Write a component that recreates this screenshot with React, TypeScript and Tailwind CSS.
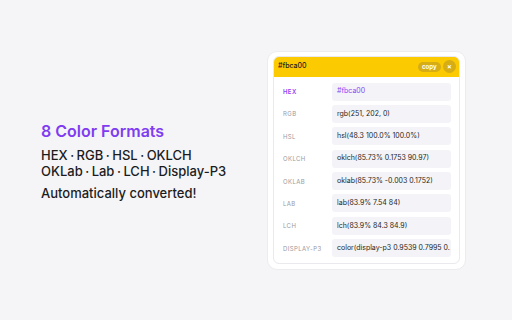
import React from 'react';

const rows = [
  { label: 'HEX', value: '#fbca00', active: true },
  { label: 'RGB', value: 'rgb(251, 202, 0)' },
  { label: 'HSL', value: 'hsl(48.3 100.0% 100.0%)' },
  { label: 'OKLCH', value: 'oklch(85.73% 0.1753 90.97)' },
  { label: 'OKLAB', value: 'oklab(85.73% -0.003 0.1752)' },
  { label: 'LAB', value: 'lab(83.9% 7.54 84)' },
  { label: 'LCH', value: 'lch(83.9% 84.3 84.9)' },
  { label: 'DISPLAY-P3', value: 'color(display-p3 0.9539 0.7995 0.' },
];

const Dot = () => <span className="mx-[2.5px]">·</span>;

const App: React.FC = () => {
  return (
    <div
      className="w-[512px] h-[320px] bg-[#f5f5f7] flex items-center"
      style={{ fontFamily: 'Inter, "Noto Sans", sans-serif' }}
    >
      {/* Left copy */}
      <div className="w-[267px] pl-[41px] pt-[2px] text-[#1c1c1e]">
        <h1 className="text-[16px] leading-[20px] font-semibold text-[#7f3cf0]">8 Color Formats</h1>
        <p className="mt-[6px] text-[13px] leading-[16.3px] font-medium">
          HEX<Dot />RGB<Dot />HSL<Dot />OKLCH
          <br />
          OKLab<Dot />Lab<Dot />LCH<Dot />Display-P3
        </p>
        <p className="mt-[6px] text-[13px] leading-[16px] font-medium">Automatically converted!</p>
      </div>

      {/* Popup preview */}
      <div className="w-[199px] h-[219px] bg-white rounded-[10px] border border-[#ececef] pt-[4px] px-[5px] pb-[5px]">
        <div className="h-full rounded-[6px] border border-[#e9e9ee] overflow-hidden flex flex-col">
          <div className="h-[20px] bg-[#fbca00] flex items-center justify-between pl-[4px] pr-[3px]">
            <span className="text-[7px] font-medium text-[#1c1c1c]">#fbca00</span>
            <div className="flex items-center gap-[2px]">
              <span className="h-[10px] px-[4.5px] rounded-full bg-[#d6ad14] text-white text-[6px] font-bold leading-[10px]">
                copy
              </span>
              <span className="w-[13px] h-[13px] rounded-full bg-[#d6ad14] text-white text-[7px] font-bold leading-[13px] text-center">
                ×
              </span>
            </div>
          </div>
          <div className="flex flex-col gap-[4.4px] pt-[6px] pl-[9px] pr-[8px]">
            {rows.map((row) => (
              <div key={row.label} className="flex items-center h-[18px]">
                <span
                  className={`w-[49px] text-[6px] tracking-[0.4px] ${
                    row.active ? 'text-[#8b44f5] font-semibold' : 'text-[#9a9aa0]'
                  }`}
                >
                  {row.label}
                </span>
                <div className="flex-1 h-[18px] rounded-[3px] bg-[#f4f4f8] flex items-center pl-[5px] overflow-hidden">
                  <span
                    className={`text-[7px] whitespace-nowrap ${
                      row.active ? 'text-[#8b44f5]' : 'text-[#1f1f22]'
                    }`}
                  >
                    {row.value}
                  </span>
                </div>
              </div>
            ))}
          </div>
        </div>
      </div>
    </div>
  );
};

export default App;
